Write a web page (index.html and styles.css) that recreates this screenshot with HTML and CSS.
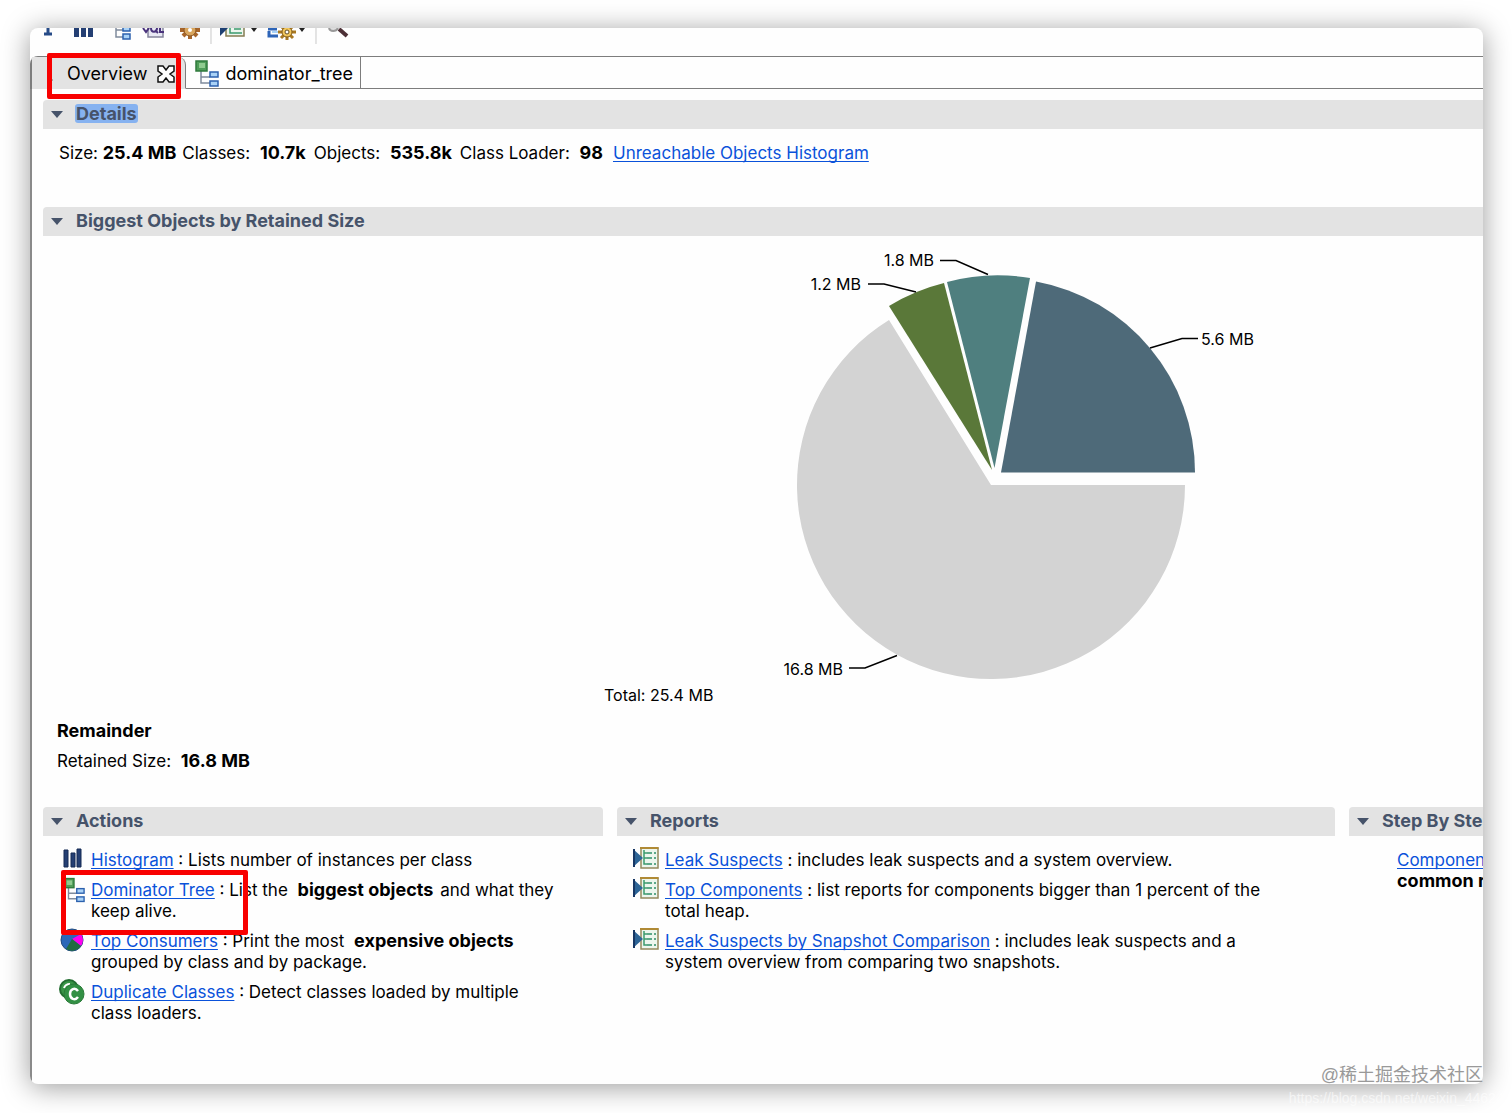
FILE: index.html
```html
<!DOCTYPE html>
<html lang="en">
<head>
    <meta charset="UTF-8">
    <meta name="viewport" content="width=device-width, initial-scale=1.0">
    <title>Memory Analyzer - Overview</title>
    <link rel="stylesheet" href="styles.css">
</head>
<body>
    <!-- Shared icons -->
    <svg class="defs" width="0" height="0">
        <symbol id="tree" viewBox="0 0 24 27">
            <path d="M6 11v12h9M6 17h9" fill="none" stroke="#7f8b9c" stroke-width="1.5"/>
            <rect x="1" y="1" width="11" height="10" fill="#4f9d58" stroke="#2f7a3c" stroke-width="1.5"/>
            <rect x="4" y="3" width="6" height="5" fill="#8fcb8f"/>
            <rect x="15" y="12" width="8" height="5" fill="#a9d2f7" stroke="#2c61ae" stroke-width="1.5"/>
            <rect x="15" y="21" width="8" height="5" fill="#a9d2f7" stroke="#2c61ae" stroke-width="1.5"/>
        </symbol>
        <symbol id="report" viewBox="0 0 26 22">
            <rect x="8" y="1" width="17" height="20" fill="#edf6ee" stroke="#94895c" stroke-width="1.5"/>
            <path d="M7 1h18.500" stroke="#b08a35" stroke-width="2"/>
            <path d="M11 3v14h5M11 6h6M11 11h6" fill="none" stroke="#3b9a6d" stroke-width="1.5"/>
            <path d="M14 6h5M14 11h5M14 17h5M21 6h2M21 11h2M21 17h2" stroke="#5da889" stroke-width="2"/>
            <path d="M0 2l10 9-10 9z" fill="#2d6496"/>
            <path d="M1 2v18" stroke="#173764" stroke-width="2"/>
        </symbol>
        <symbol id="arrow" viewBox="0 0 12 7">
            <path d="M0 0h12L6 7z" fill="#46536a"/>
        </symbol>
    </svg>

    <main class="window">
        <div class="toolbar">
            <svg class="toolbar-icons" width="330" height="17" viewBox="0 0 330 17">
                <path d="M18 0v5M14 6h8" stroke="#264b87" stroke-width="3"/>
                <path d="M44 0h5v9h-5zM51 0h5v9h-5zM58 0h5v9h-5z" fill="#243f73"/>
                <path d="M86 0v9h8M86 2h8" stroke="#7f8b9c" stroke-width="1.500" fill="none"/>
                <rect x="93" y="-2" width="7" height="5" fill="#a9d2f7" stroke="#2c61ae" stroke-width="1.500"/>
                <rect x="93" y="6" width="7" height="5" fill="#a9d2f7" stroke="#2c61ae" stroke-width="1.500"/>
                <path d="M118-2v11h15V-2" fill="#e8e8f4" stroke="#85859c" stroke-width="1.500"/>
                <path d="M113 0l3 4 3-4M121 0c0 5 6 5 6 0M125 2l3 3M130 0v4h4" fill="none" stroke="#49327c" stroke-width="2"/>
                <path d="M150 2h20M160 0v11M153 8l4-4M167 8l-4-4" stroke="#a8652a" stroke-width="4"/>
                <circle cx="160" cy="2" r="6" fill="#d9a55c" stroke="#8b5725"/>
                <circle cx="160" cy="2" r="2" fill="#fff"/>
                <path d="M181 0v16M286 0v16" stroke="#c9c9c9"/>
                <path d="M196-2v10h18V-2" fill="#edf6ee" stroke="#857c52" stroke-width="1.500"/>
                <path d="M200 0v5h12M204 1h7" fill="none" stroke="#3b9a6d" stroke-width="1.500"/>
                <path d="M190 0h8l-8 8z" fill="#1d3f72"/>
                <path d="M221 0h6l-3 4zM269 0h6l-3 4z" fill="#222"/>
                <path d="M238 1h9M239 3v5h9" fill="none" stroke="#2d64b8" stroke-width="3"/>
                <path d="M242 4h7" stroke="#a9d2f7" stroke-width="2"/>
                <path d="M248 4h18M257-4v16M251 10l12-12M263 10L251-2" stroke="#a87821" stroke-width="3"/>
                <circle cx="257" cy="4" r="5" fill="#f3c75b" stroke="#805b1c"/>
                <circle cx="257" cy="4" r="2" fill="#fff" stroke="#604b24"/>
                <path d="M299 0c1 4 7 4 9 0" fill="#ddd" stroke="#999" stroke-width="2"/>
                <path d="M309 1l8 7" stroke="#4d3036" stroke-width="4"/>
            </svg>
        </div>

        <nav class="tabs">
            <div class="tab tab-active">
                <span class="highlight highlight-tab"></span>
                <svg class="info" width="6" height="16" viewBox="0 0 6 16"><path d="M1 2h3M0 14h6" stroke="#777" stroke-width="1"/></svg>
                <a class="tab-link" href="#details">Overview</a>
                <button class="close" type="button" aria-label="Close">
                    <svg width="18" height="18" viewBox="0 0 18 18"><path d="M1 1h5l3 4 3-4h5v5l-4 3 4 3v5h-5l-3-4-3 4H1v-5l4-3-4-3z" fill="#fff" stroke="#111" stroke-width="1.500"/></svg>
                </button>
            </div>
            <div class="tab">
                <svg width="24" height="27"><use href="#tree"/></svg>
                <a class="tab-link" href="#tree-view">dominator_tree</a>
            </div>
        </nav>

        <div class="editor">
            <section id="details">
                <h2 class="section-title"><svg width="12" height="7"><use href="#arrow"/></svg><span class="selected">Details</span></h2>
                <p class="stats">
                    <span>Size: <b>25.4 MB</b></span>
                    <span>Classes: <b class="wide">10.7k</b></span>
                    <span>Objects: <b class="wide">535.8k</b></span>
                    <span>Class Loader: <b class="wide">98</b></span>
                    <a class="histogram-link" href="#">Unreachable Objects Histogram</a>
                </p>
            </section>

            <section>
                <h2 class="section-title"><svg width="12" height="7"><use href="#arrow"/></svg>Biggest Objects by Retained Size</h2>
                <svg class="chart" width="656" height="474" viewBox="604 236 656 474">
                    <path d="M991 485h194A194 194 0 1 1 889 320z" fill="#d3d3d3"/>
                    <path d="M1001 472.500L1036 281.500A194 194 0 0 1 1195 472.500z" fill="#4e6a79"/>
                    <path d="M994.500 468L947 282A194 194 0 0 1 1030 278z" fill="#4f7f7f"/>
                    <path d="M992 470L889 306A194 194 0 0 1 944 283z" fill="#5a7839"/>
                    <g fill="none" stroke="#000" stroke-width="1.500">
                        <path d="M940 260.500h16l32 14"/>
                        <path d="M868 284h16l32 8"/>
                        <path d="M1198 338.500h-16l-32 9.500"/>
                        <path d="M849 668h16l32-12.500"/>
                    </g>
                    <g class="chart-label">
                        <text x="934" y="266" text-anchor="end">1.8 MB</text>
                        <text x="861" y="290" text-anchor="end">1.2 MB</text>
                        <text x="1201" y="345">5.6 MB</text>
                        <text x="843" y="675" text-anchor="end">16.8 MB</text>
                        <text x="604" y="701">Total: 25.4 MB</text>
                    </g>
                </svg>
                <div class="remainder">
                    <p><b>Remainder</b></p>
                    <p>Retained Size: <b class="wide">16.8 MB</b></p>
                </div>
            </section>

            <div class="columns">
                <section>
                    <h2 class="section-title"><svg width="12" height="7"><use href="#arrow"/></svg>Actions</h2>
                    <ul class="links">
                        <li>
                            <svg width="26" height="22" viewBox="0 0 26 22"><path d="M5 3h4v17H5zM12 6h4v14h-4zM18 2h4v18h-4z" fill="#243f73" stroke="#142b55"/></svg>
                            <p><a href="#">Histogram</a> : Lists number of instances per class</p>
                        </li>
                        <li class="marked">
                            <span class="highlight highlight-item"></span>
                            <svg class="tree-icon" width="26" height="26" viewBox="0 0 26 26"><use href="#tree" x="4" width="22" height="26"/></svg>
                            <p><a href="#">Dominator Tree</a> : List the <b class="wide">biggest objects</b> and what they keep alive.</p>
                        </li>
                        <li>
                            <svg width="26" height="24" viewBox="0 0 26 24">
                                <circle cx="13" cy="12" r="11" fill="#2b68b8" stroke="#224a7d"/>
                                <path d="M13 11l9-5a11 11 0 0 1 0 12z" fill="#ff00f0"/>
                                <path d="M13 11l9 7a11 11 0 0 1-15 3z" fill="#216c42"/>
                            </svg>
                            <p><a href="#">Top Consumers</a> : Print the most <b class="wide">expensive objects</b> grouped by class and by package.</p>
                        </li>
                        <li>
                            <svg width="26" height="26" viewBox="0 0 26 26">
                                <circle cx="10" cy="10" r="9" fill="#399447" stroke="#236d31" stroke-width="2"/>
                                <path d="M5 9c1-3 3-4 6-4" fill="none" stroke="#fff" stroke-width="2"/>
                                <circle cx="15" cy="15" r="10" fill="#329044" stroke="#2a7a38" stroke-width="1"/>
                                <path d="M19 12c-3-4-8-2-8 3s5 7 8 3" fill="none" stroke="#fff" stroke-width="2.500"/>
                            </svg>
                            <p><a href="#">Duplicate Classes</a> : Detect classes loaded by multiple class loaders.</p>
                        </li>
                    </ul>
                </section>

                <section>
                    <h2 class="section-title"><svg width="12" height="7"><use href="#arrow"/></svg>Reports</h2>
                    <ul class="links">
                        <li>
                            <svg width="26" height="22"><use href="#report"/></svg>
                            <p><a href="#">Leak Suspects</a> : includes leak suspects and a system overview.</p>
                        </li>
                        <li>
                            <svg width="26" height="22"><use href="#report"/></svg>
                            <p><a href="#">Top Components</a> : list reports for components bigger than 1 percent of the total heap.</p>
                        </li>
                        <li>
                            <svg width="26" height="22"><use href="#report"/></svg>
                            <p><a href="#">Leak Suspects by Snapshot Comparison</a> : includes leak suspects and a system overview from comparing two snapshots.</p>
                        </li>
                    </ul>
                </section>

                <section>
                    <h2 class="section-title"><svg width="12" height="7"><use href="#arrow"/></svg>Step By Step</h2>
                    <ul class="links">
                        <li class="plain">
                            <p><a href="#">Component</a><br><b>common r</b></p>
                        </li>
                    </ul>
                </section>
            </div>
        </div>
    </main>

    <span class="watermark">@稀土掘金技术社区</span>
    <span class="source">https://blog.csdn.net/weixin_44624117</span>
</body>
</html>
```

FILE: styles.css
```css
* {
    box-sizing: border-box;
}
body {
    position: relative;
    display: flex;
    min-height: 100vh;
    margin: 0;
    padding: 28px 29px 29px 30px;
    overflow: hidden;
    background-color: #fff;
    color: #000;
    font-family: Inter, "Liberation Sans", sans-serif;
    font-size: 17px;
    line-height: 21px;
}
h2, p, ul {
    margin: 0;
    padding: 0;
}
svg {
    display: block;
    flex: none;
}
.defs {
    position: absolute;
}
a {
    color: #0a52da;
    text-decoration: underline;
    text-underline-offset: 2px;
    text-decoration-skip-ink: none;
}
b {
    font-size: 18px;
    font-weight: 700;
    line-height: 20px;
}
.wide {
    margin: 0 2px 0 5px;
}
.window {
    flex: 1;
    min-width: 0;
    display: flex;
    flex-direction: column;
    overflow: hidden;
    border-radius: 8px;
    background-color: #fefefe;
    box-shadow: 0 3px 28px rgba(0, 0, 0, 0.4);
}
.toolbar {
    height: 28px;
}
.tabs {
    display: flex;
    height: 33px;
    border: 1px solid #7d7d7d;
    border-width: 1px 0 0 2px;
    border-top-left-radius: 8px;
    font-size: 18px;
}
.tab {
    position: relative;
    display: flex;
    align-items: center;
    gap: 6px;
    padding: 2px 7px 0 9px;
    border-right: 1px solid #7d7d7d;
    border-bottom: 1px solid #7d7d7d;
}
.tabs::after {
    content: "";
    flex: 1;
    border-bottom: 1px solid #7d7d7d;
}
.tab-active {
    gap: 10px;
    padding: 2px 10px 0 15px;
    border-bottom-color: #e3e3e3;
    border-top-right-radius: 8px;
    background-color: #e3e3e3;
}
.tab-link {
    color: #000;
    text-decoration: none;
}
.info {
    margin-right: 4px;
}
.close {
    display: flex;
    padding: 0;
    border: 0;
    background: none;
}
.highlight {
    position: absolute;
    z-index: 1;
    border: 5px solid #f80000;
    border-radius: 2px;
}
.highlight-tab {
    top: -4px;
    right: 4px;
    bottom: -11px;
    left: 15px;
}
.highlight-item {
    top: -10px;
    bottom: -13px;
    left: 2px;
    width: 187px;
}
.editor {
    flex: 1;
    padding: 11px 0 60px 11px;
    border-left: 2px solid #8a8a8a;
}
/* The form is wider than the window and gets cut off on the right */
.editor > * {
    width: calc(100% + 338px);
}
.section-title {
    display: flex;
    align-items: center;
    gap: 13px;
    height: 29px;
    padding: 0 8px 3px;
    border-radius: 4px 4px 0 0;
    background-color: #e3e3e3;
    color: #46536a;
    font-size: 18px;
    font-weight: 700;
}
.section-title svg {
    margin-top: 3px;
}
.selected {
    margin: 0 -1px;
    padding: 0 1px;
    border-radius: 3px;
    background-color: #86b2f0;
    line-height: 19px;
}
.stats {
    display: flex;
    gap: 6px;
    padding: 14px 16px 43px;
}
.histogram-link {
    margin-left: 2px;
}
.chart {
    margin: 0 auto;
}
.chart-label {
    font-size: 16px;
}
.remainder {
    display: flex;
    flex-direction: column;
    gap: 9px;
    padding: 11px 14px 35px;
}
.columns {
    display: grid;
    grid-template-columns: 560fr 718fr 472fr;
    gap: 14px;
}
.links {
    display: flex;
    flex-direction: column;
    gap: 9px;
    padding: 14px 40px 0 16px;
    list-style: none;
}
.links li {
    display: flex;
    gap: 6px;
}
.links svg {
    margin-top: -3px;
}
.links .tree-icon {
    margin-bottom: -6px;
}
.marked {
    position: relative;
}
.links .plain {
    padding-left: 32px;
}
.watermark {
    position: absolute;
    right: 29px;
    bottom: 26px;
    color: #999;
    font-family: "Liberation Sans", "Noto Sans CJK SC", sans-serif;
    font-size: 18px;
    line-height: 24px;
}
.source {
    position: absolute;
    right: -14px;
    bottom: 5px;
    color: rgba(255, 255, 255, 0.6);
    font-family: "Liberation Sans", sans-serif;
    font-size: 14px;
    line-height: 20px;
}
```
